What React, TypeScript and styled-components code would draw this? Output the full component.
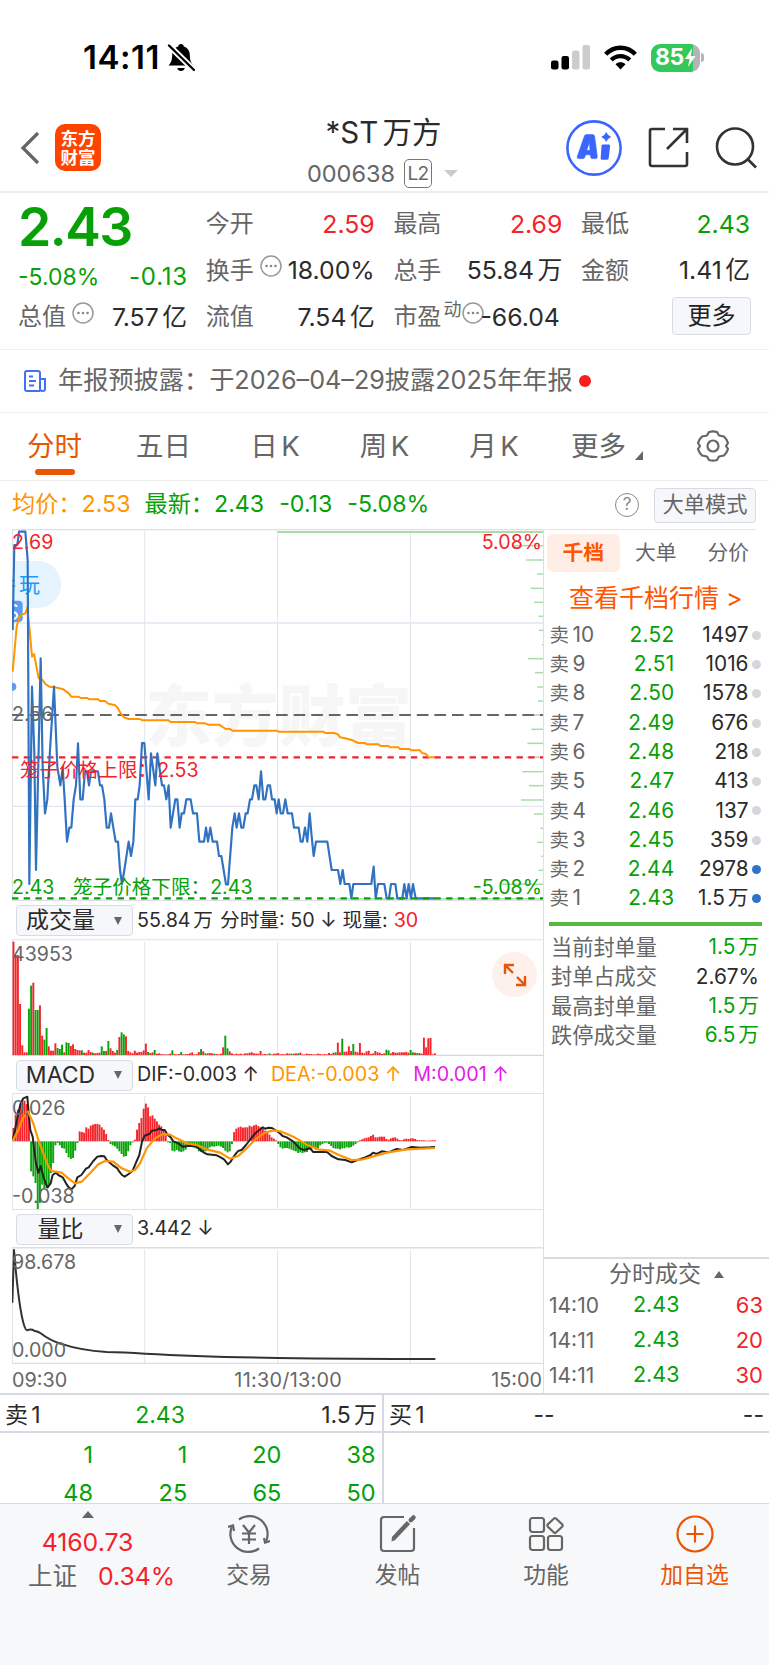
import React from "react";
import styled, { createGlobalStyle } from "styled-components";

const RED = "#f5222b";
const GREEN = "#07a007";
const ORANGE = "#ea5504";
const AMBER = "#ff9500";
const GREY = "#666";
const DARK = "#2b2b2b";
const LINE = "#e3e5ee";

const Global = createGlobalStyle`
  * { box-sizing: border-box; }
  body { margin: 0; background: #fff; }
  #root { width: 769px; }
`;

const Page = styled.div`
  width: 769px;
  height: 1665px;
  overflow: hidden;
  background: #fff;
  color: ${DARK};
  font-family: Inter, "Noto Sans CJK SC", sans-serif;
  font-size: 24px;
  line-height: 1;
  white-space: nowrap;
  display: flex;
  flex-direction: column;
`;

/* ---------- status bar ---------- */
const StatusBar = styled.div`
  height: 108px;
  padding: 7px 65px 0 83px;
  display: flex;
  align-items: center;
  justify-content: space-between;
`;
const Clock = styled.div`
  display: flex;
  align-items: center;
  gap: 7px;
  color: #000;
  font-size: 33px;
  font-weight: 600;
  letter-spacing: 0.5px;
`;
const StatusIcons = styled.div`
  display: flex;
  align-items: center;
  gap: 14px;
`;
const Battery = styled.div`
  display: flex;
  align-items: center;
  gap: 1px;
`;
const BatteryBody = styled.div`
  width: 49px;
  height: 28px;
  border-radius: 9px;
  background: linear-gradient(90deg, #34c759 0 42px, #b4b4b6 42px);
  color: #fff;
  font-size: 23px;
  font-weight: 700;
  display: flex;
  align-items: center;
  padding-left: 4px;
  letter-spacing: -0.5px;
`;
const BatteryNub = styled.div`
  width: 3px;
  height: 9px;
  border-radius: 0 3px 3px 0;
  background: #b4b4b6;
`;

/* ---------- header ---------- */
const Header = styled.header`
  height: 85px;
  border-bottom: 2px solid #eee;
  display: grid;
  grid-template-columns: 230px 1fr 230px;
  align-items: center;
`;
const HeaderLeft = styled.div`
  display: flex;
  align-items: center;
  gap: 15px;
  padding: 0 0 4px 20px;
`;
const Logo = styled.div`
  width: 46px;
  height: 47px;
  border-radius: 10px;
  background: #ff4400;
  color: #fff;
  font-size: 17.5px;
  font-weight: 700;
  line-height: 19px;
  text-align: center;
  padding-top: 5px;
`;
const HeaderTitle = styled.div`
  display: flex;
  flex-direction: column;
  align-items: center;
  gap: 11px;
  padding-top: 4px;
`;
const Name = styled.div`
  font-size: 29.5px;
  line-height: 32px;
  word-spacing: -4px;
  margin-left: -2px;
`;
const Code = styled.div`
  display: flex;
  align-items: center;
  gap: 9px;
  color: ${GREY};
  font-size: 23.5px;
  line-height: 29px;
  margin-left: -4px;
`;
const Level = styled.span`
  width: 28px;
  height: 29px;
  border: 1.5px solid #777;
  border-radius: 5px;
  font-size: 19px;
  line-height: 27px;
  text-align: center;
  letter-spacing: -0.5px;
`;
const Caret = styled.span<{ $c?: string; $w?: number; $h?: number; $up?: boolean; $l?: number }>`
  width: 0;
  height: 0;
  margin-left: ${(p) => p.$l ?? 0}px;
  border: solid transparent;
  border-width: 0 ${(p) => (p.$w ?? 12) / 2}px;
  ${(p) =>
    p.$up
      ? `border-bottom: ${p.$h ?? 7}px solid ${p.$c ?? GREY};`
      : `border-top: ${p.$h ?? 7}px solid ${p.$c ?? GREY};`}
`;
const HeaderRight = styled.div`
  display: flex;
  align-items: center;
  justify-content: flex-end;
  gap: 26px;
  padding: 0 11px 4px 0;
`;

/* ---------- quote summary ---------- */
const Summary = styled.section`
  height: 157px;
  border-bottom: 1px solid #eee;
  padding: 8px 19px 0 18px;
  display: grid;
  grid-template-columns: repeat(4, 169px);
  column-gap: 18.7px;
`;
const SummaryCol = styled.div`
  display: flex;
  flex-direction: column;
`;
const Price = styled.div`
  height: 52px;
  font-size: 53.5px;
  line-height: 52px;
  font-weight: 600;
  color: ${GREEN};
  letter-spacing: -1.6px;
`;
const Change = styled.div`
  height: 41px;
  padding-top: 7px;
  display: flex;
  align-items: center;
  justify-content: space-between;
  color: ${GREEN};
  font-size: 23px;
  > :last-child { font-size: 24px; letter-spacing: 0.8px; margin-right: -1px; }
`;
const Cell = styled.div`
  height: 46.6px;
  display: flex;
  align-items: center;
  color: ${GREY};
`;
const Hint = styled.span<{ $l?: number }>`
  margin: -9px 0 0 ${(p) => p.$l ?? 6}px;
  height: 22px;
`;
const Sup = styled.span`
  font-size: 18px;
  margin: -14px 0 0 2px;
`;
const Value = styled.span<{ $c?: string; $pull?: boolean }>`
  margin-left: ${(p) => (p.$pull ? "-4px" : "auto")};
  color: ${(p) => p.$c ?? DARK};
  font-size: 24.8px;
`;
const Wan = styled.span`
  margin-left: 0.14em;
`;
const MoreButton = styled.div`
  width: 79px;
  height: 38px;
  margin: 3px -1px 0 auto;
  border: 1.5px solid #d9dbe4;
  border-radius: 4px;
  background: #f6f7fa;
  color: #222;
  display: flex;
  align-items: center;
  justify-content: center;
`;

/* ---------- news ---------- */
const News = styled.section`
  height: 63px;
  border-bottom: 1px solid #f0f0f0;
  display: flex;
  align-items: center;
  padding-left: 24px;
  color: ${GREY};
  font-size: 25.2px;
`;
const NewsText = styled.span`
  margin: 0 6px 0 12px;
`;
const Dot = styled.span<{ $c: string; $s: number }>`
  width: ${(p) => p.$s}px;
  height: ${(p) => p.$s}px;
  border-radius: 50%;
  background: ${(p) => p.$c};
`;

/* ---------- period tabs ---------- */
const Tabs = styled.nav`
  height: 68px;
  border-bottom: 1px solid #eee;
  display: grid;
  grid-template-columns: 109px 109px 114px 105px 114px 106px 1fr;
`;
const Tab = styled.div<{ $on?: boolean }>`
  display: flex;
  flex-direction: column;
  align-items: center;
  padding-top: 18px;
  font-size: 27.5px;
  line-height: 30px;
  gap: 8px;
  color: ${(p) => (p.$on ? ORANGE : GREY)};
  word-spacing: -4px;
  &::after {
    content: "";
    width: 40px;
    height: 6px;
    border-radius: 3px;
    background: ${(p) => (p.$on ? ORANGE : "transparent")};
  }
`;
const MoreTab = styled.div`
  display: flex;
  padding: 18px 0 0 20px;
  font-size: 27.5px;
  line-height: 30px;
  color: ${GREY};
  gap: 9px;
`;
const Corner = styled.span`
  width: 0;
  height: 0;
  margin-top: 20px;
  border-left: 8px solid transparent;
  border-bottom: 9px solid ${GREY};
`;
const GearWrap = styled.div`
  padding: 17px 0 0 40px;
`;

const InfoBar = styled.div`
  height: 48px;
  display: flex;
  align-items: center;
  padding: 0 13px 0 12px;
  font-size: 23.2px;
`;
const Info = styled.span<{ $c: string; $l?: number }>`
  color: ${(p) => p.$c};
  margin-left: ${(p) => p.$l ?? 0}px;
`;
const Help = styled.span`
  margin-left: auto;
  width: 24px;
  height: 24px;
  border: 1.6px solid #888;
  border-radius: 50%;
  color: #888;
  font-size: 17px;
  line-height: 21px;
  text-align: center;
`;
const ModeButton = styled.span`
  width: 102px;
  height: 35px;
  margin-left: 15px;
  border: 1.5px solid #d9dbe4;
  border-radius: 4px;
  background: #f6f7fa;
  color: ${GREY};
  font-size: 21.2px;
  display: flex;
  align-items: center;
  justify-content: center;
`;

/* ---------- chart area ---------- */
const Main = styled.main`
  height: 864px;
  display: flex;
`;
const Charts = styled.div`
  width: 531px;
  margin-left: 12px;
  display: flex;
  flex-direction: column;
`;
const Plot = styled.div<{ $h: number }>`
  position: relative;
  height: ${(p) => p.$h}px;
  overflow: hidden;
  svg { display: block; }
`;
const Overlay = styled.div`
  position: absolute;
  left: 0;
  top: 0;
`;
const Label = styled.span<{ $x?: number; $r?: number; $y: number; $c?: string }>`
  position: absolute;
  ${(p) => (p.$r !== undefined ? `right: ${p.$r}px;` : `left: ${p.$x ?? 0}px;`)}
  top: ${(p) => p.$y}px;
  color: ${(p) => p.$c ?? GREY};
  font-size: 19.6px;
  line-height: 24px;
`;
const Pill = styled.div`
  position: absolute;
  left: 0;
  top: 32px;
  width: 49px;
  height: 47px;
  border-radius: 0 23px 23px 0;
  background: #e5f3ff;
  color: #1b9cfc;
  font-size: 21px;
  line-height: 48px;
  padding-left: 7px;
`;
const Expand = styled.div`
  position: absolute;
  right: 6px;
  top: 13px;
  width: 45px;
  height: 45px;
  border-radius: 50%;
  background: #fef0ea;
  display: flex;
  align-items: center;
  justify-content: center;
`;
const PickRow = styled.div<{ $h: number }>`
  height: ${(p) => p.$h}px;
  display: flex;
  align-items: center;
  padding: 1px 0 0 4px;
  font-size: 19.7px;
`;
const Picker = styled.div`
  width: 117px;
  height: 31px;
  margin-right: 4px;
  border: 1.5px solid #d9dbe4;
  border-radius: 4px;
  background: #f6f7fa;
  font-size: 23px;
  display: flex;
  align-items: center;
  justify-content: space-between;
  padding: 0 10px 0 0;
`;
const PickName = styled.span`
  width: 87px;
  text-align: center;
`;
const Metric = styled.span<{ $c?: string; $l?: number }>`
  color: ${(p) => p.$c ?? DARK};
  margin-left: ${(p) => p.$l ?? 0}px;
`;
const Axis = styled.div`
  height: 29px;
  display: flex;
  align-items: center;
  justify-content: space-between;
  color: ${GREY};
  font-size: 19.8px;
  padding: 5px 1px 0 0;
  > :nth-child(2) { margin-left: 18px; letter-spacing: 0.3px; }
`;

/* ---------- right column ---------- */
const Side = styled.aside`
  width: 226px;
  border-left: 1px solid #dcdfe6;
  display: flex;
  flex-direction: column;
`;
const SideTabs = styled.div`
  height: 45px;
  width: 212px;
  border-top: 1.5px solid ${LINE};
  padding: 4px 0 0 3px;
  display: flex;
`;
const SideTab = styled.div<{ $on?: boolean }>`
  flex: none;
  width: 72.5px;
  height: 38px;
  border-radius: 6px;
  line-height: 38px;
  text-align: center;
  font-size: 20.8px;
  font-weight: ${(p) => (p.$on ? 700 : 400)};
  color: ${(p) => (p.$on ? "#ff5500" : GREY)};
  background: ${(p) => (p.$on ? "#ffeee6" : "transparent")};
`;
const DepthLink = styled.div`
  height: 46px;
  padding-left: 25px;
  color: #ff5500;
  font-size: 25px;
  line-height: 48px;
`;
const DepthRow = styled.div`
  height: 29.3px;
  display: grid;
  grid-template-columns: 54px 71px 74px 1fr;
  align-items: center;
  padding: 1px 0 0 5.5px;
  font-size: 20.8px;
  > :nth-child(1) { color: ${GREY}; }
  > :nth-child(2) { color: ${GREEN}; text-align: right; letter-spacing: 0.3px; }
  > :nth-child(3) { text-align: right; }
  > :nth-child(4) { margin-left: 3px; }
`;
const Small = styled.span`
  font-size: 19.5px;
  margin-right: 3.5px;
`;
const Bar = styled.div`
  width: 213px;
  height: 4px;
  margin: 9px 0 7px 5px;
  background: #55b83f;
`;
const SealRow = styled.div<{ $c?: string }>`
  height: 29.3px;
  display: flex;
  align-items: center;
  justify-content: space-between;
  padding: 0 10px 0 7px;
  font-size: 21.2px;
  color: ${GREY};
  > :last-child { color: ${(p) => p.$c ?? GREEN}; font-size: 20.8px; }
`;
const Ticks = styled.div`
  margin-top: auto;
  height: 136px;
  border-top: 2px solid #d9dbe3;
`;
const TicksHead = styled.div`
  height: 28px;
  display: flex;
  align-items: center;
  gap: 13px;
  padding: 2px 0 0 65px;
  font-size: 23px;
  color: ${GREY};
`;
const Tick = styled.div`
  height: 35px;
  display: grid;
  grid-template-columns: 84px 60px 1fr;
  align-items: center;
  padding: 1px 6px 0 5px;
  font-size: 21.5px;
  > :nth-child(1) { color: ${GREY}; font-size: 21px; }
  > :nth-child(2) { color: ${GREEN}; }
  > :nth-child(3) { color: ${RED}; text-align: right; font-size: 22px; }
`;

/* ---------- order queue ---------- */
const Queue = styled.section`
  height: 110px;
  display: grid;
  grid-template-columns: 382px 387px;
  border-top: 2px solid #d6d8e2;
`;
const QueueSide = styled.div`
  & + & { border-left: 2px solid #d6d8e2; }
`;
const QueueHead = styled.div`
  height: 38px;
  border-bottom: 2px solid #d6d8e2;
  display: grid;
  grid-template-columns: 128px 54px 1fr;
  align-items: center;
  padding: 4px 5px 0 5px;
  font-size: 23px;
  > :nth-child(2) { text-align: center; justify-self: center; }
  > :nth-child(3) { text-align: right; }
`;
const QueueRow = styled.div`
  height: 38px;
  display: grid;
  grid-template-columns: 93px repeat(3, 94.2px);
  align-items: center;
  text-align: right;
  color: ${GREEN};
  font-size: 23.5px;
  padding-top: 5px;
`;

/* ---------- bottom navigation ---------- */
const BottomNav = styled.footer`
  flex: 1;
  border-top: 1px solid #d9dbe3;
  background: #f7f8fa;
  display: grid;
  grid-template-columns: 175px 148px 149px 148px 149px;
  align-items: start;
`;
const IndexBox = styled.div`
  display: flex;
  flex-direction: column;
  align-items: center;
  color: ${RED};
  padding-top: 7px;
`;
const IndexValue = styled.div`
  height: 34px;
  margin-top: 7px;
  line-height: 34px;
  font-size: 24.8px;
`;
const IndexName = styled.div`
  display: flex;
  gap: 21px;
  padding-left: 28px;
  height: 35px;
  align-items: center;
  font-size: 24.8px;
`;
const Muted = styled.span`
  color: ${GREY};
  font-size: 24.5px;
`;
const NavItem = styled.div<{ $on?: boolean }>`
  display: flex;
  flex-direction: column;
  align-items: center;
  padding-top: 10px;
  gap: 10px;
  font-size: 22.8px;
  color: ${(p) => (p.$on ? ORANGE : GREY)};
  svg { display: block; }
`;

/* ---------- data ---------- */
const pricePath =
  "38,330 43,75 52,75 57,35 76,35 83,120 88,1092 96,500 103,700 108,1050 122,415 128,740 135,880 142,838 150,690 162,500 172,740 181,796 188,745 194,838 201,965 208,923 214,923 221,838 228,796 234,670 241,838 248,838 255,754 261,754 267,796 273,754 294,754 300,796 306,796 313,838 320,923 327,923 333,880 340,923 347,965 354,965 360,1050 366,1092 373,1050 386,965 393,1008 400,965 406,838 413,838 419,796 426,669 433,669 446,838 453,700 466,796 472,700 480,754 486,796 492,796 499,838 506,796 512,923 526,838 532,838 539,923 545,880 552,880 559,838 572,838 579,880 591,880 598,965 612,965 618,923 624,965 631,923 638,965 651,965 657,1008 664,1008 678,1093 684,1093 697,923 704,880 710,923 717,880 724,923 730,923 737,880 743,880 750,838 756,838 763,796 769,796 776,838 783,754 790,838 796,838 803,796 810,796 816,838 824,838 830,880 836,838 842,880 849,880 856,838 863,880 876,880 882,923 896,923 902,965 908,965 915,923 922,965 929,880 935,950 941,1008 948,965 982,965 995,1050 1014,1050 1021,1092 1028,1050 1034,1092 1048,1092 1054,1135 1060,1092 1114,1092 1121,1040 1127,1135 1134,1092 1153,1092 1160,1135 1167,1135 1173,1092 1186,1092 1192,1135 1207,1135 1213,1092 1220,1135 1226,1092 1233,1135 1239,1092 1247,1135 1305,1135";
const avgPath =
  "38,455 43,400 50,320 58,290 68,283 76,280 82,262 88,320 96,410 102,402 116,475 128,480 136,492 148,500 165,502 190,508 206,520 214,530 235,530 242,534 262,534 268,538 295,538 300,543 315,543 325,551 346,556 352,562 362,580 372,592 386,597 420,597 427,601 505,601 512,606 585,606 592,610 615,610 624,614 657,614 677,627 690,627 697,632 830,632 836,635 970,635 976,639 1002,639 1014,643 1020,652 1035,655 1058,661 1074,669 1096,669 1100,673 1135,673 1142,678 1165,678 1170,682 1195,682 1200,687 1228,687 1234,691 1260,691 1266,699 1278,702 1286,712 1305,712";
const bands: [number, number][] = [
  [730, 77], [768, 120], [801, 162], [782, 205], [792, 247], [806, 289], [807, 331], [815, 374], [774, 416],
  [795, 458], [802, 501], [804, 543], [785, 585], [784, 628], [772, 670], [770, 712], [757, 755], [777, 797],
  [753, 840], [792, 882], [811, 925], [802, 967], [814, 1009], [805, 1051], [695, 1093], [200, 1136],
];
/* one entry per traded minute; positive is a rising minute, negative a falling one */
const volume = [
  340, 300, 300, 153, 29, 8, 8, -139, -208, 217, -135, -135, 149, 58, -46, -81, 26, 13, 13, 35, -21, -18, -31, 8, -38,
  -36, 27, 32, 18, 15, 14, -14, 7, 7, 15, 9, -7, 5, 6, 7, -26, -12, 12, -42, 20, 12, 7, -15, 54, -68, -62, 56, 12, 8, 5,
  13, 7, 9, 9, 14, 34, -9, 6, 8, -15, 4, 5, 3, 2, 2, 2, 4, -14, 3, 2, 3, -9, 2, 3, 3, 5, 8, 2, 3, 9, -18, 11, -5, 5, 6, 5,
  -4, 3, 2, 4, 23, -58, -20, 11, 5, 2, 4, 3, 4, 2, 5, 5, 7, 8, 5, 4, 4, 12, 2, 3, 2, -5, 2, 4, 4, 6, 2, 3, 2, 5, 4, -4, 4,
  5, -5, 7, 2, 2, 4, 3, 3, 2, 2, 4, 3, 2, 3, 2, 6, 3, 7, -8, 37, 8, -49, 10, 10, 26, 12, -33, 10, 8, 36, 7, 5, 11, 13, 3,
  5, 12, 8, 7, 3, 5, -16, -14, 5, 9, 7, 7, 8, 8, 8, 9, 7, -15, -8, 7, -6, 6, 4, 52, 23, 50, 51, 2, 5,
];
const macd = [
  40, 80, 95, 110, 122, 122, 112, 80, -90, -105, -125, -203, -185, -130, -140, -140, -130, -95, -65, -12, -5, -12, -20,
  -22, -35, -48, -53, -50, -28, -5, 30, 28, 26, 42, 38, 47, 50, 52, 52, 50, 42, 35, 22, 4, -8, -12, -15, -22, -30, -38,
  -46, -44, -30, -12, -3, 5, 35, 55, 70, 98, 113, 102, 75, 78, 68, 60, 50, 45, 35, 18, -3, -5, -28, -30, -26, -30, -32,
  -30, -25, -12, -14, -14, -18, -22, -30, -32, -33, -30, -27, -18, -15, -16, -14, -13, -16, -20, -28, -33, -30, -8, 28,
  38, 42, 44, 41, 42, 42, 47, 44, 48, 50, 46, 42, 38, 32, 28, 20, 12, 8, 3, -8, -18, -22, -20, -20, -22, -25, -28, -30,
  -35, -33, -35, -33, -32, -20, -22, -20, -25, -20, -12, -8, -5, -4, -8, -14, -20, -22, -22, -24, -21, -21, -18, -19,
  -17, -13, -8, -3, 3, 6, 9, 11, 12, 16, 20, 12, 12, 14, 14, 14, 7, 5, 9, 11, 12, 8, 4, 3, 6, 8, 7, 9, 9, 7, 4, 3, 3, 3,
  2, 2, 3, 3, 3,
];
const difPath =
  "38,720 45,690 55,640 62,610 70,595 82,590 86,640 91,690 98,710 104,760 108,790 115,818 122,798 130,830 137,850 143,862 152,850 158,825 168,818 175,825 188,832 198,850 206,862 214,868 224,858 232,832 244,825 258,806 266,802 280,783 292,770 303,768 313,769 320,780 340,797 352,805 358,815 366,825 374,830 386,822 398,812 408,788 418,765 426,725 434,707 448,702 456,692 470,690 478,685 486,690 494,690 503,705 512,712 520,724 535,730 548,740 570,737 590,740 602,750 612,758 622,763 650,766 662,772 672,778 684,793 692,785 698,774 710,758 716,752 725,750 738,735 754,714 766,700 778,690 788,682 795,686 806,683 816,684 828,692 836,697 848,708 860,712 880,725 900,746 912,750 930,745 940,756 980,755 995,768 1015,778 1036,780 1055,787 1070,781 1095,772 1112,765 1119,758 1130,762 1145,754 1165,757 1190,747 1210,750 1235,741 1260,743 1290,742 1305,741";
const deaPath =
  "38,722 55,690 68,655 84,635 100,670 115,720 130,760 145,800 155,813 185,818 205,835 225,850 245,845 270,820 295,793 315,783 340,785 365,805 390,815 405,810 420,790 440,745 465,715 490,702 510,704 530,715 560,730 590,735 620,748 660,758 690,776 715,768 740,745 770,715 795,698 820,691 845,695 880,710 920,734 955,748 990,752 1015,764 1055,780 1085,779 1120,769 1160,758 1220,748 1305,744";

const asks: [string, string, string, boolean][] = [
  ["10", "2.52", "1497", false], ["9", "2.51", "1016", false], ["8", "2.50", "1578", false],
  ["7", "2.49", "676", false], ["6", "2.48", "218", false], ["5", "2.47", "413", false],
  ["4", "2.46", "137", false], ["3", "2.45", "359", false], ["2", "2.44", "2978", true], ["1", "2.43", "1.5万", true],
];
const ticks = [["14:10", "2.43", "63"], ["14:11", "2.43", "20"], ["14:11", "2.43", "30"]];
const queue = [["1", "1", "20", "38"], ["48", "25", "65", "50"]];

const withUnit = (v: string) =>
  /[万亿]$/.test(v) ? (<>{v.slice(0, -1)}<Wan>{v.slice(-1)}</Wan></>) : v;

/* ---------- drawings ---------- */
const Ellipsis = ({ left }: { left?: number }) => (
  <Hint $l={left}>
    <svg width="22" height="22" viewBox="0 0 22 22">
      <circle cx="11" cy="11" r="10" fill="none" stroke="#999" strokeWidth="1.5" />
      <circle cx="6.5" cy="11" r="1.3" fill="#888" /><circle cx="11" cy="11" r="1.3" fill="#888" /><circle cx="15.5" cy="11" r="1.3" fill="#888" />
    </svg>
  </Hint>
);

const Verticals = ({ y1, y2 }: { y1: number; y2: number }) => (
  <g stroke={LINE} strokeWidth="3">
    {[434, 833, 1231].map((x) => <line key={x} x1={x} x2={x} y1={y1} y2={y2} />)}
  </g>
);

const PriceChart = () => (
  <svg width="532" height="372" viewBox="36 27 1596 1116">
    <text x="436" y="664" fontSize="200" fontWeight="900" fill="#f6f6f7" fontFamily="Noto Sans CJK SC, sans-serif">东方财富</text>
    <Verticals y1={33} y2={1135} />
    <g stroke="#e3e5f0" strokeWidth="4">
      <line x1="36" x2="1630" y1="309" y2="309" />
      <line x1="36" x2="1630" y1="859" y2="859" />
    </g>
    <g stroke="#dcdfe6" strokeWidth="4">
      <line x1="36" x2="1632" y1="29" y2="29" />
      <line x1="37" x2="37" y1="27" y2="1143" />
      <line x1="36" x2="1632" y1="1141" y2="1141" />
    </g>
    <g stroke="#a9dca9" strokeWidth="4.5">
      <line x1="832" x2="1630" y1="36" y2="36" strokeWidth="6" />
      {bands.map(([x, y]) => <line key={y} x1={x + 810} x2="1630" y1={y} y2={y} />)}
    </g>
    <line x1="36" x2="1630" y1="585" y2="585" stroke="#666" strokeWidth="6.5" strokeDasharray="35 17.8" />
    <line x1="36" x2="1630" y1="712" y2="712" stroke="#f0222b" strokeWidth="6.5" strokeDasharray="19 16.2" />
  </svg>
);

const PriceLines = () => (
  <Overlay>
    <svg width="532" height="372" viewBox="36 27 1596 1116">
      <path d="M36 242h20q12 0 12 12v40q0 12-12 12h-20z" fill="#5c9cf8" />
      <path d="M52 259q-14-8-20 2q-3 11 9 15q14 5 9 15q-6 10-20 2" fill="none" stroke="#fff" strokeWidth="6" />
      <circle cx="37" cy="500" r="12" fill="#5c9cf8" />
      <path d="M36 182h8M36 198h10M40 212v10" stroke="#1b9cfc" strokeWidth="4" />
      <polyline points={avgPath} fill="none" stroke={AMBER} strokeWidth="6" strokeLinejoin="round" />
      <polyline points={pricePath} fill="none" stroke="#3173c0" strokeWidth="6.5" strokeLinejoin="round" />
      <line x1="36" x2="1630" y1="1135" y2="1135" stroke="#07a007" strokeWidth="6.5" strokeDasharray="19 16.2" />
    </svg>
  </Overlay>
);

const VolumeChart = () => (
  <svg width="532" height="117" viewBox="36 116 1596 351">
    <Verticals y1={124} y2={465} />
    <g stroke="#e6e7ec" strokeWidth="4">
      <line x1="36" x2="1632" y1="118" y2="118" />
      <line x1="37" x2="37" y1="116" y2="467" />
      <line x1="36" x2="1632" y1="465.5" y2="465.5" stroke="#d4d7de" />
    </g>
    {volume.map((v, i) => (
      <rect key={i} x={37.5 + i * 6.62} width="5.8" y={464 - Math.abs(v)} height={Math.abs(v)} fill={v > 0 ? "#f5252b" : "#0ba30b"} />
    ))}
  </svg>
);

const MacdChart = () => (
  <svg width="532" height="117" viewBox="36 579 1596 351">
    <Verticals y1={588} y2={928} />
    <g stroke="#e0e2e8" strokeWidth="3">
      <line x1="36" x2="1632" y1="580.5" y2="580.5" />
      <line x1="37" x2="37" y1="579" y2="930" />
      <line x1="36" x2="1632" y1="928.5" y2="928.5" />
    </g>
    {macd.map((v, i) => (
      <rect key={i} x={37.5 + i * 6.62} width="5.8" y={v > 0 ? 724 - v : 724} height={Math.abs(v)} fill={v > 0 ? "#f5252b" : "#0ba30b"} />
    ))}
    <polyline points={difPath} fill="none" stroke="#222" strokeWidth="6" strokeLinejoin="round" />
    <polyline points={deaPath} fill="none" stroke={AMBER} strokeWidth="6.5" strokeLinejoin="round" />
  </svg>
);

const RatioChart = () => (
  <svg width="532" height="117" viewBox="36 143 1596 351">
    <Verticals y1={151} y2={492} />
    <g stroke="#dcdee4" strokeWidth="5">
      <line x1="36" x2="1632" y1="145" y2="145" />
      <line x1="37" x2="37" y1="143" y2="494" strokeWidth="3" />
      <line x1="36" x2="1632" y1="492.5" y2="492.5" strokeWidth="4" />
    </g>
    <path d="M37 310L42 152L48 220Q58 320 68 362Q75 392 81 393Q94 388 102 394Q115 396 122 402Q150 424 182 433Q240 453 320 458Q370 459 435 463Q600 472 833 476Q1050 479 1306 479" fill="none" stroke="#333" strokeWidth="6" strokeLinejoin="round" />
  </svg>
);

export default function App() {
  return (
    <Page>
      <Global />
      <StatusBar>
        <Clock>
          14:11
          <svg width="28" height="29" viewBox="0 0 28 29">
            <path d="M14 1c1.7 0 2.6 1 2.8 2.4 4 1.2 5.9 4.500 6 8.600 .1 5 1 7.600 3.700 10.500H1.500C4.200 19.600 5.100 17 5.200 12 5.300 7.900 7.200 4.600 11.200 3.400 11.400 2 12.300 1 14 1zM10.200 25h7.600c-.5 1.900-1.900 3-3.800 3s-3.300-1.100-3.800-3z" fill="#000" />
            <path d="M1 1.500L27 27" stroke="#fff" strokeWidth="6" />
            <path d="M2 2.500L27 27" stroke="#000" strokeWidth="2.300" strokeLinecap="round" />
          </svg>
        </Clock>
        <StatusIcons>
          <svg width="39" height="25" viewBox="0 0 39 25">
            <rect x="0" y="15.500" width="7.500" height="9" rx="2.200" /><rect x="10.500" y="11" width="7.500" height="13.500" rx="2.200" />
            <rect x="21" y="5.500" width="7.500" height="19" rx="2.200" fill="#ccc" /><rect x="31.500" y="0" width="7.500" height="24.500" rx="2.200" fill="#ccc" />
          </svg>
          <svg width="33" height="25" viewBox="0 0 33 25" fill="none" stroke="#000" strokeWidth="4.400">
            <path d="M1.700 9.300C10 .5 23 .5 31.300 9.300" /><path d="M7.300 15c5.200-5.200 13.200-5.200 18.400 0" />
            <path d="M16.500 24.500l-5-5.200c3-2.600 7-2.600 10 0z" fill="#000" stroke="none" />
          </svg>
          <Battery>
            <BatteryBody>
              85
              <svg width="12" height="19" viewBox="0 0 12 19"><path d="M8 0L1 11h4.500L4 19l7.500-11H7z" fill="#fff" /></svg>
            </BatteryBody>
            <BatteryNub />
          </Battery>
        </StatusIcons>
      </StatusBar>

      <Header>
        <HeaderLeft>
          <svg width="20" height="34" viewBox="0 0 20 34"><path d="M18 2L3 17L18 32" fill="none" stroke="#666" strokeWidth="3.200" /></svg>
          <Logo>东方<br />财富</Logo>
        </HeaderLeft>
        <HeaderTitle>
          <Name>*ST 万方</Name>
          <Code>000638<Level>L2</Level><Caret $c="#ccc" $w={14} $h={7} $l={3} /></Code>
        </HeaderTitle>
        <HeaderRight>
          <svg width="56" height="56" viewBox="0 0 56 56">
            <circle cx="28" cy="28" r="26.600" fill="#fff" stroke="#3a66ff" strokeWidth="2.600" />
            <path fillRule="evenodd" d="M11.200 36.800L18.400 16Q18.900 14.500 20.500 14.500H26.600Q28.300 14.500 28.600 16.200L31.300 36.600Q31.500 38.600 29.600 38.600H26.200Q24.900 38.600 24.700 37.300L24.400 34.800H19.600L18.800 37.200Q18.300 38.600 16.900 38.600H12.600Q10.600 38.600 11.200 36.800ZM20.700 30.300H24L23.400 22.500Z" fill="#3a66ff" stroke="#3a66ff" strokeWidth=".6" />
            <path d="M36.500 24.500H43Q44.300 24.500 44.100 26L42.700 38.300Q42.500 39.800 41 39.800H36Q34.500 39.800 34.700 38.300L35.500 25.500Q35.600 24.500 36.500 24.500Z" fill="#3a66ff" />
            <path d="M40.200 12.600Q41.200 15.800 44.600 16.900Q41.200 18 40.200 21.300Q39.200 18 35.800 16.900Q39.200 15.800 40.200 12.600Z" fill="#3a66ff" stroke="#3a66ff" strokeWidth=".8" />
          </svg>
          <svg width="41" height="41" viewBox="0 0 41 41" fill="none" stroke="#333" strokeWidth="2.600">
            <path d="M17 2H4Q2 2 2 4V37Q2 39 4 39H37Q39 39 39 37V25" /><path d="M25 2H39V16M38 3L19 22" />
          </svg>
          <svg width="43" height="42" viewBox="0 0 43 42" fill="none" stroke="#333" strokeWidth="2.600">
            <circle cx="20" cy="19.500" r="18" /><path d="M32 31.500L41 40.500" />
          </svg>
        </HeaderRight>
      </Header>

      <Summary>
        <SummaryCol>
          <Price>2.43</Price>
          <Change><span>-5.08%</span><span>-0.13</span></Change>
          <Cell>总值<Ellipsis /><Value>{withUnit("7.57亿")}</Value></Cell>
        </SummaryCol>
        <SummaryCol>
          <Cell>今开<Value $c={RED}>2.59</Value></Cell>
          <Cell>换手<Ellipsis /><Value>18.00%</Value></Cell>
          <Cell>流值<Value>{withUnit("7.54亿")}</Value></Cell>
        </SummaryCol>
        <SummaryCol>
          <Cell>最高<Value $c={RED}>2.69</Value></Cell>
          <Cell>总手<Value>{withUnit("55.84万")}</Value></Cell>
          <Cell>市盈<Sup>动</Sup><Ellipsis left={1} /><Value $pull>-66.04</Value></Cell>
        </SummaryCol>
        <SummaryCol>
          <Cell>最低<Value $c={GREEN}>2.43</Value></Cell>
          <Cell>金额<Value>{withUnit("1.41亿")}</Value></Cell>
          <MoreButton>更多</MoreButton>
        </SummaryCol>
      </Summary>

      <News>
        <svg width="22" height="22" viewBox="0 0 22 22" fill="none" stroke="#4070f4" strokeWidth="2">
          <path d="M16 21H3Q1 21 1 19V3Q1 1 3 1H14Q16 1 16 3V19Q16 21 18.500 21Q21 21 21 19V9H16" /><path d="M5 6.500H9M5 11H12M5 15.500H10" />
        </svg>
        <NewsText>年报预披露：于2026–04–29披露2025年年报</NewsText>
        <Dot $c="#fb1d1d" $s={12} />
      </News>

      <Tabs>
        <Tab $on>分时</Tab>
        <Tab>五日</Tab>
        <Tab>日 K</Tab>
        <Tab>周 K</Tab>
        <Tab>月 K</Tab>
        <MoreTab>更多<Corner /></MoreTab>
        <GearWrap>
          <svg width="32" height="32" viewBox="0 0 32 32" fill="none" stroke="#666" strokeWidth="2.200" strokeLinejoin="round">
            <path d="M12 2Q16 .8 20 2L22 5.500L27 6.500Q30 9.500 31 13L29 16L31 19Q30 22.500 27 25.500L22 26.500L20 30Q16 31.200 12 30L10 26.500L5 25.500Q2 22.500 1 19L3 16L1 13Q2 9.500 5 6.500L10 5.500Z" />
            <circle cx="16" cy="16" r="5.500" />
          </svg>
        </GearWrap>
      </Tabs>

      <InfoBar>
        <Info $c={AMBER}>均价：2.53</Info>
        <Info $c={GREEN} $l={14}>最新：2.43</Info>
        <Info $c={GREEN} $l={15}>-0.13</Info>
        <Info $c={GREEN} $l={15}>-5.08%</Info>
        <Help>?</Help>
        <ModeButton>大单模式</ModeButton>
      </InfoBar>

      <Main>
        <Charts>
          <Plot $h={372}>
            <PriceChart />
            <Pill>玩</Pill>
            <PriceLines />
            <Label $y={1} $c={RED}>2.69</Label>
            <Label $r={1} $y={1} $c={RED}>5.08%</Label>
            <Label $y={173}>2.56</Label>
            <Label $x={8} $y={229} $c={RED}>笼子价格上限：2.53</Label>
            <Label $y={346} $c={GREEN}>2.43</Label>
            <Label $x={61} $y={346} $c={GREEN}>笼子价格下限：2.43</Label>
            <Label $r={1} $y={346} $c={GREEN}>-5.08%</Label>
          </Plot>
          <PickRow $h={38}>
            <Picker><PickName>成交量</PickName><Caret $w={9} $h={8} /></Picker>
            <Metric>{withUnit("55.84万")}</Metric>
            <Metric $l={7}>分时量: 50 ↓</Metric>
            <Metric $l={6}>现量:</Metric>
            <Metric $l={6} $c={RED}>30</Metric>
          </PickRow>
          <Plot $h={117}>
            <VolumeChart />
            <Label $y={3}>43953</Label>
            <Expand>
              <svg width="24" height="24" viewBox="0 0 24 24" fill="none" stroke={ORANGE} strokeWidth="2.400">
                <path d="M2 11V2H11M2.500 2.500L10 10M22 13V22H13M21.500 21.500L14 14" />
              </svg>
            </Expand>
          </Plot>
          <PickRow $h={37}>
            <Picker><PickName>MACD</PickName><Caret $w={9} $h={8} /></Picker>
            <Metric>DIF:-0.003 ↑</Metric>
            <Metric $l={12} $c={AMBER}>DEA:-0.003 ↑</Metric>
            <Metric $l={12} $c="#e41be8">M:0.001 ↑</Metric>
          </PickRow>
          <Plot $h={117}>
            <MacdChart />
            <Label $y={3}>0.026</Label>
            <Label $y={91}>-0.038</Label>
          </Plot>
          <PickRow $h={37}>
            <Picker><PickName>量比</PickName><Caret $w={9} $h={8} /></Picker>
            <Metric>3.442 ↓</Metric>
          </PickRow>
          <Plot $h={117}>
            <RatioChart />
            <Label $y={3}>98.678</Label>
            <Label $y={91}>0.000</Label>
          </Plot>
          <Axis><span>09:30</span><span>11:30/13:00</span><span>15:00</span></Axis>
        </Charts>

        <Side>
          <SideTabs>
            <SideTab $on>千档</SideTab>
            <SideTab>大单</SideTab>
            <SideTab>分价</SideTab>
          </SideTabs>
          <DepthLink>查看千档行情 &gt;</DepthLink>
          {asks.map(([n, p, q, hot]) => (
            <DepthRow key={n}>
              <span><Small>卖</Small>{n}</span>
              <span>{p}</span>
              <span>{withUnit(q)}</span>
              <Dot $s={9} $c={hot ? "#2f73c4" : "#d4d7dc"} />
            </DepthRow>
          ))}
          <Bar />
          <SealRow><span>当前封单量</span><span>{withUnit("1.5万")}</span></SealRow>
          <SealRow $c={DARK}><span>封单占成交</span><span>2.67%</span></SealRow>
          <SealRow><span>最高封单量</span><span>{withUnit("1.5万")}</span></SealRow>
          <SealRow><span>跌停成交量</span><span>{withUnit("6.5万")}</span></SealRow>
          <Ticks>
            <TicksHead>分时成交<Caret $up $w={11} $h={7} /></TicksHead>
            {ticks.map(([t, p, v]) => (
              <Tick key={v}><span>{t}</span><span>{p}</span><span>{v}</span></Tick>
            ))}
          </Ticks>
        </Side>
      </Main>

      <Queue>
        <QueueSide>
          <QueueHead><span>卖<Wan>1</Wan></span><Info $c={GREEN}>2.43</Info><span>{withUnit("1.5万")}</span></QueueHead>
          {queue.map((r, i) => (
            <QueueRow key={i}>{r.map((v, j) => <span key={j}>{v}</span>)}</QueueRow>
          ))}
        </QueueSide>
        <QueueSide>
          <QueueHead><span>买<Wan>1</Wan></span><span>--</span><span>--</span></QueueHead>
        </QueueSide>
      </Queue>

      <BottomNav>
        <IndexBox>
          <Caret $up $w={13} $h={7} />
          <IndexValue>4160.73</IndexValue>
          <IndexName><Muted>上证</Muted>0.34%</IndexName>
        </IndexBox>
        <NavItem>
          <svg width="42" height="40" viewBox="0 0 42 40" fill="none" stroke="#666" strokeWidth="2.200">
            <path d="M11 5.500A18 18 0 0 1 38 27.500M31 34.500A18 18 0 0 1 4 12.500" />
            <path d="M0 13L5 11.500L6 17M42 27L37 28.500L36 24" />
            <path d="M15 11L21 18.500L27 11M21 18.500V30M14 19.500H28M14 25.500H28" />
          </svg>
          交易
        </NavItem>
        <NavItem>
          <svg width="40" height="40" viewBox="0 0 40 40" fill="none" stroke="#666" strokeWidth="2.200">
            <path d="M26 3H6Q3 3 3 6V34Q3 37 6 37H33Q36 37 36 34V14" /><path d="M15.500 24.500L30.500 8.500" strokeWidth="4.500" /><path d="M32.800 6.200L35.500 3.500" strokeWidth="4.500" strokeLinecap="round" />
            <path d="M13.500 27.500L14 22.500L17.500 26z" fill="#666" stroke="none" />
          </svg>
          发帖
        </NavItem>
        <NavItem>
          <svg width="38" height="40" viewBox="0 0 38 40" fill="none" stroke="#666" strokeWidth="2.200">
            <rect x="3" y="4" width="14" height="14" rx="2.500" /><rect x="3" y="22" width="14" height="14" rx="2.500" /><rect x="21" y="22" width="14" height="14" rx="2.500" />
            <path d="M27 4.500Q28 3.500 29 4.500L35.300 10.500Q36 11.500 35.300 12.500L29 18.500Q28 19.500 27 18.500L20.700 12.500Q20 11.500 20.700 10.500Z" />
          </svg>
          功能
        </NavItem>
        <NavItem $on>
          <svg width="40" height="40" viewBox="0 0 40 40" fill="none" stroke={ORANGE} strokeWidth="2.200">
            <circle cx="20" cy="20" r="17.500" /><path d="M11.500 20H28.500M20 11.500V28.500" />
          </svg>
          加自选
        </NavItem>
      </BottomNav>
    </Page>
  );
}
